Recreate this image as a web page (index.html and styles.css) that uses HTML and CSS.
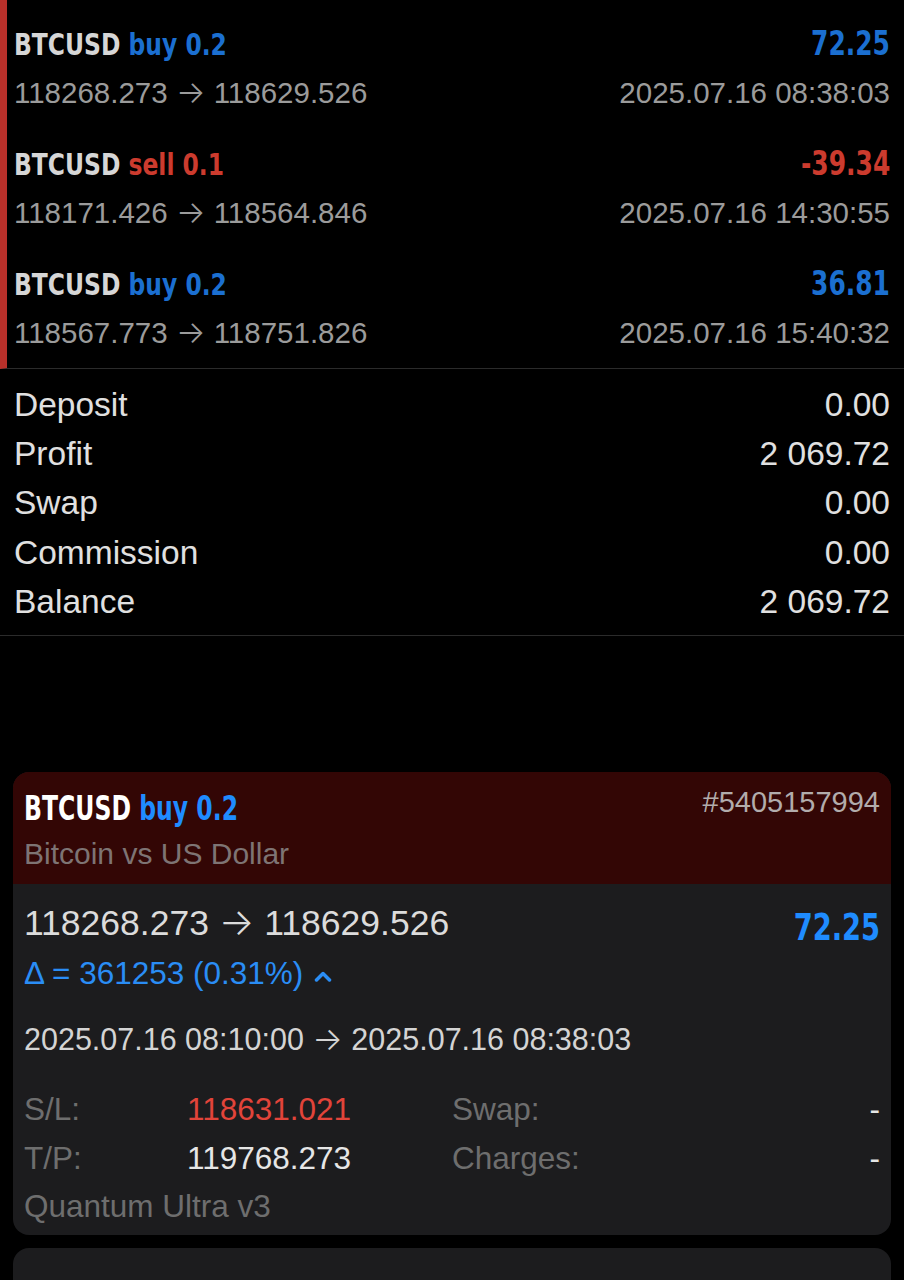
FILE: index.html
```html
<!DOCTYPE html>
<html lang="en">
<head>
  <meta charset="UTF-8">
  <meta name="viewport" content="width=device-width, initial-scale=1.0">
  <title>History</title>
  <link rel="stylesheet" href="styles.css">
</head>
<body>
  <!-- closed deals -->
  <div class="deals">
    <div class="deal">
      <div class="deal-line">
        <span class="sym">BTCUSD <span class="buy">buy 0.2</span></span>
        <span class="pl buy">72.25</span>
      </div>
      <div class="deal-line sub">
        <span>118268.273 <span class="arr">&rarr;</span> 118629.526</span>
        <span>2025.07.16 08:38:03</span>
      </div>
    </div>
    <div class="deal">
      <div class="deal-line">
        <span class="sym">BTCUSD <span class="sell">sell 0.1</span></span>
        <span class="pl sell">-39.34</span>
      </div>
      <div class="deal-line sub">
        <span>118171.426 <span class="arr">&rarr;</span> 118564.846</span>
        <span>2025.07.16 14:30:55</span>
      </div>
    </div>
    <div class="deal">
      <div class="deal-line">
        <span class="sym">BTCUSD <span class="buy">buy 0.2</span></span>
        <span class="pl buy">36.81</span>
      </div>
      <div class="deal-line sub">
        <span>118567.773 <span class="arr">&rarr;</span> 118751.826</span>
        <span>2025.07.16 15:40:32</span>
      </div>
    </div>
  </div>

  <!-- totals -->
  <div class="summary">
    <div class="sum-row"><span>Deposit</span><span>0.00</span></div>
    <div class="sum-row"><span>Profit</span><span>2 069.72</span></div>
    <div class="sum-row"><span>Swap</span><span>0.00</span></div>
    <div class="sum-row"><span>Commission</span><span>0.00</span></div>
    <div class="sum-row"><span>Balance</span><span>2 069.72</span></div>
  </div>

  <!-- expanded deal card -->
  <div class="card">
    <div class="card-head">
      <div class="head-top">
        <span class="sym">BTCUSD <span class="buy-light">buy 0.2</span></span>
        <span class="ticket">#5405157994</span>
      </div>
      <div class="desc">Bitcoin vs US Dollar</div>
    </div>
    <div class="card-body">
      <div class="price-row">
        <span class="prices">118268.273 <span class="arr">&rarr;</span> 118629.526</span>
        <span class="pl buy-light">72.25</span>
      </div>
      <div class="delta">
        &Delta; = 361253 (0.31%)
        <svg class="caret" width="18" height="12" viewBox="0 0 18 12">
          <path d="M2.5 10 L9 3.5 L15.5 10" fill="none" stroke="#2a8df5" stroke-width="3.5" stroke-linecap="round" stroke-linejoin="round"/>
        </svg>
      </div>
      <div class="times">2025.07.16 08:10:00 <span class="arr">&rarr;</span> 2025.07.16 08:38:03</div>
      <div class="details">
        <span class="label">S/L:</span>
        <span class="val red">118631.021</span>
        <span class="label">Swap:</span>
        <span class="val right">-</span>
        <span class="label">T/P:</span>
        <span class="val">119768.273</span>
        <span class="label">Charges:</span>
        <span class="val right">-</span>
        <span class="label comment">Quantum Ultra v3</span>
      </div>
    </div>
  </div>

  <div class="card next"></div>
</body>
</html>
```

FILE: styles.css
```css
body {
  margin: 0;
  background-color: #000;
  color: #e4e4e4;
  font-family: 'Liberation Sans', Arial, sans-serif;
}

/* long thin arrow between prices */
.arr {
  font-family: Inter, 'DejaVu Sans', sans-serif;
  font-weight: 300;
  font-size: 1.05em;
  line-height: 1;
}

/* deal list */
.deals {
  border-left: 7px solid #b8302a;
  padding: 0 14px 8px 7px;
  border-bottom: 1px solid #2b2b2b;
}

.deal {
  padding: 24px 0 7px;
}

.deal-line {
  display: flex;
  justify-content: space-between;
  align-items: center;
  height: 40px;
  line-height: 40px;
}

.deal-line.sub {
  margin-top: 9px;
  font-size: 29.5px;
  color: #9b9b9b;
}

/* condensed bold face: DejaVu Condensed squeezed a little more */
.sym,
.pl {
  display: inline-block;
  font-family: 'DejaVu Sans Condensed', 'DejaVu Sans', sans-serif;
  font-weight: bold;
  font-size: 31px;
  white-space: nowrap;
}

.sym {
  color: #d6d6d6;
  transform: scaleX(0.84);
  transform-origin: left center;
}

.pl {
  font-size: 33px;
  transform: scaleX(0.84);
  transform-origin: right center;
}

.buy {
  color: #1b6fd1;
}

.sell {
  color: #cc3b2e;
}

.buy-light {
  color: #1f8cff;
}

/* totals */
.summary {
  padding: 11px 14px 9px;
  border-bottom: 1px solid #2b2b2b;
  font-size: 33.5px;
  color: #e0e0e0;
}

.sum-row {
  display: flex;
  justify-content: space-between;
  align-items: center;
  height: 49.3px;
}

/* card */
.card {
  margin: 136px 13px 0;
  border-radius: 16px;
  background-color: #1c1c1e;
  overflow: hidden;
}

.card-head {
  background-color: #330605;
  padding: 15px 11px 11px;
}

.head-top {
  display: flex;
  justify-content: space-between;
  align-items: flex-start;
  height: 42px;
  line-height: 42px;
}

.head-top .sym {
  color: #fff;
  font-size: 34px;
  transform: scaleX(0.77);
}

.ticket {
  font-size: 29px;
  color: #b2acac;
  line-height: 30px;
}

.desc {
  margin-top: 6px;
  line-height: 38px;
  font-size: 30px;
  color: #7e7474;
}

.card-body {
  padding: 19px 11px 4px;
}

.price-row {
  display: flex;
  justify-content: space-between;
  align-items: center;
  height: 40px;
  line-height: 40px;
}

.prices {
  font-size: 35.5px;
  color: #dcdcdc;
}

.price-row .pl {
  font-size: 38px;
  margin-top: 8px;
  transform: scaleX(0.8);
}

.delta {
  margin-top: 10px;
  height: 40px;
  line-height: 40px;
  font-size: 31.5px;
  color: #2a8df5;
}

.caret {
  margin-left: 2px;
  vertical-align: middle;
}

.times {
  margin-top: 26px;
  height: 40px;
  line-height: 40px;
  font-size: 30.5px;
  color: #d4d4d4;
}

.details {
  margin-top: 26px;
  display: grid;
  grid-template-columns: 163px 265px 1fr auto;
  grid-auto-rows: 48.5px;
  align-items: center;
  font-size: 31.5px;
}

.label {
  color: #6e6e6e;
}

.val {
  color: #e6e6e6;
}

.val.red {
  color: #e2443a;
}

.val.right {
  text-align: right;
}

.comment {
  grid-column: 1 / 4;
}

.card.next {
  margin-top: 13px;
  height: 120px;
}
```
